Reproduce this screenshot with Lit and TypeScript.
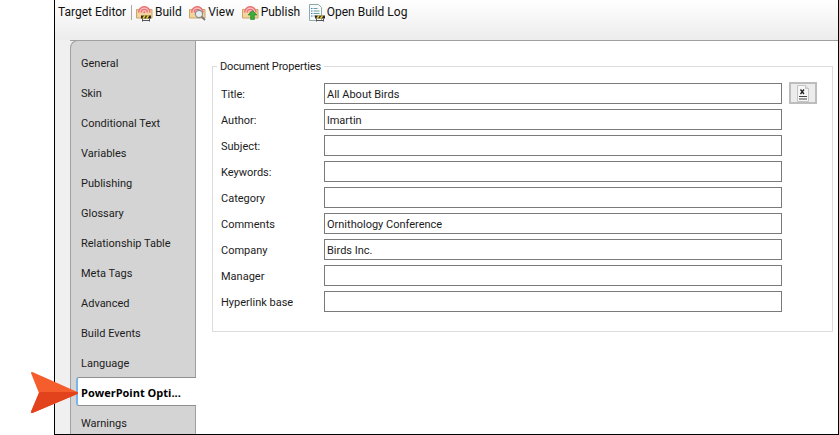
import { LitElement, html, css, svg } from "lit";
import { customElement } from "lit/decorators.js";

const TABS = ["General","Skin","Conditional Text","Variables","Publishing","Glossary","Relationship Table","Meta Tags","Advanced","Build Events","Language","PowerPoint Opti...","Warnings"];
const FIELDS: [string,string][] = [["Title:","All About Birds"],["Author:","lmartin"],["Subject:",""],["Keywords:",""],["Category",""],["Comments","Ornithology Conference"],["Company","Birds Inc."],["Manager",""],["Hyperlink base",""]];

const base = svg`
  <path d="M.5 6.500h15.500v8.500H.5z" fill="#f3d49b" stroke="#c8a468"/>
  <path d="M2 9.500A6.300 6.300 0 0 1 14.600 9.500z" fill="#f7c6c2"/>
  <path d="M2.600 9.500a5.700 5.700 0 0 1 11.400 0" fill="none" stroke="#ec6f72" stroke-width="1.500"/>
  <path d="M5.200 9.500a3.100 3.100 0 0 1 6.200 0" fill="none" stroke="#ec6f72" stroke-width="1.400"/>
  <circle cx="8.300" cy="9.300" r="1" fill="#ec6f72"/>`;
const barrier = svg`
  <path d="M5 12.500h10v3H5z" fill="#2b2b2b"/>
  <path d="M7 15.500l2-3M10.500 15.500l2-3" stroke="#f0c820" stroke-width="1.500"/>
  <path d="M6.500 15.500v3M13.500 15.500v3M6.500 17.500h7" stroke="#555" stroke-width="1"/>`;

@customElement("app-root")
export class AppRoot extends LitElement {
  static styles = css`
    :host { display:block; width:839px; height:435px; position:relative; overflow:hidden; background:#fff;
      font-family:Roboto,"Open Sans",sans-serif; font-size:11px; color:#1c1c1c; }
    .win { margin-left:54px; width:785px; height:435px; box-sizing:border-box; border-left:1px solid #000; border-right:1px solid #000; border-bottom:1px solid #000;
      background:#f0f0f0; display:flex; flex-direction:column; overflow:hidden; }
    .head { height:40px; flex:none; background:linear-gradient(#fff,#ececec); }
    .bar { height:25px; display:flex; align-items:center; padding-left:3px; box-sizing:border-box; padding-bottom:1px; font-size:12px; color:#111; }
    .bar .t { width:73px; flex:none; }
    .sep { width:1px; height:15px; background:#a8a8a8; margin-right:4px; flex:none; }
    .btn { display:flex; align-items:center; gap:1px; margin-right:7.5px; }
    .btn svg { display:block; flex:none; }
    .panel { margin-left:15px; flex:1; display:flex; min-height:0; border-top:1px solid #a0a0a0; }
    .rail { width:126px; flex:none; box-sizing:border-box; background:#d4d4d4; border-left:1px solid #a0a0a0; border-right:1px solid #a0a0a0; padding-top:7px; border-top-left-radius:8px; margin-top:-1px; border-top:1px solid #a0a0a0; }
    .tab { height:30px; display:flex; align-items:center; padding-left:10px; white-space:nowrap; box-sizing:border-box; }
    .tab.sel { background:#fff; font-family:"Open Sans",Roboto,sans-serif; font-weight:700; height:29px; margin-left:5px; margin-right:-1px; padding:1px 0 0 3px; border-left:2px solid #7ab4e8; border-top:1px solid #8f8f8f; border-bottom:1px solid #8f8f8f; border-radius:3px 0 0 3px; margin-top:-1px; margin-bottom:2px; color:#000; }
    .main { flex:1; background:#fff; padding:25px 5px 0 16px; }
    .group { position:relative; height:266px; box-sizing:border-box; border:1px solid #dcdcdc; padding:13px 0 0 8px; }
    .legend { position:absolute; left:4px; top:-7px; background:#fff; padding:0 3px; line-height:14px; letter-spacing:-.15px; }
    .row { display:flex; align-items:center; height:26px; }
    .lab { width:103px; flex:none; padding-top:2px; }
    .inp { width:458px; height:21px; flex:none; box-sizing:border-box; border:1px solid #7a7a7a; padding:2px 0 0 2px; display:flex; align-items:center; }
    .xbtn { width:28px; height:22px; margin-left:7px; box-sizing:border-box; border:2px solid #bdbdbd; background:#ececec; display:flex; align-items:center; justify-content:center; }
    .arrow { position:absolute; left:28px; top:369px; }
  `;
  render() {
    return html`<div class="win">
      <div class="head"><div class="bar">
        <span class="t">Target Editor</span><span class="sep"></span>
        <span class="btn"><svg width="18" height="19" viewBox="0 0 18 19">${base}${barrier}</svg>Build</span>
        <span class="btn"><svg width="18" height="19" viewBox="0 0 18 19">${base}<circle cx="10" cy="11" r="3.600" fill="#e6eef2" stroke="#8c8c8c" stroke-width="1.200"/><path d="M12.600 13.600l3.400 3.400" stroke="#777" stroke-width="1.800"/></svg>View</span>
        <span class="btn"><svg width="18" height="19" viewBox="0 0 18 19">${base}<path d="M10.500 7.500l4.500 4.500h-2.600v4.500H8.600v-4.500H6z" fill="#35b03a" stroke="#1f7a25" stroke-width=".6"/></svg>Publish</span>
        <span class="btn"><svg width="18" height="19" viewBox="0 0 18 19"><path d="M1.500 1.500h9l3 3v13h-12z" fill="#f7fbfb" stroke="#8fa8a8"/><path d="M3 5.500h1.500M3 8h1.500M3 10.500h1.500M3 13h1.500" stroke="#3a78c8"/><path d="M5.500 5.500h4M5.500 8h6M5.500 10.500h6M5.500 13h3" stroke="#6fa0a0"/>
          <g transform="translate(2 0)">${barrier}</g></svg>Open Build Log</span>
      </div></div>
      <div class="panel">
        <div class="rail">${TABS.map((t,i)=>html`<div class="tab ${i===11?"sel":""}">${t}</div>`)}</div>
        <div class="main"><div class="group">
          <span class="legend">Document Properties</span>
          ${FIELDS.map(([l,v],i)=>html`<div class="row"><span class="lab">${l}</span><span class="inp">${v}</span>${i===0?html`<span class="xbtn"><svg width="14" height="17" viewBox="0 0 14 17"><path d="M1.500.500h8l3 3v13h-11z" fill="#f6f6f6" stroke="#c4c4c4"/><path d="M9.500.500v3h3" fill="#ddd" stroke="#c4c4c4"/><path d="M4.500 4.500l3.500 4.500M8 4.500L4.500 9" stroke="#222" stroke-width="1.300"/><path d="M3 11.500h8M3 14h8" stroke="#444"/></svg></span>`:""}</div>`)}
        </div></div>
      </div>
    </div>
    <svg class="arrow" width="52" height="48" viewBox="0 0 52 48"><path d="M4 4L49 24 4 43 12 24z" fill="#f55d2c" stroke="#f55d2c" stroke-width="2" stroke-linejoin="round"/><path d="M12 24H49L4 43z" fill="#e2431c" stroke="#e2431c" stroke-width="2" stroke-linejoin="round"/></svg>`;
  }
}
